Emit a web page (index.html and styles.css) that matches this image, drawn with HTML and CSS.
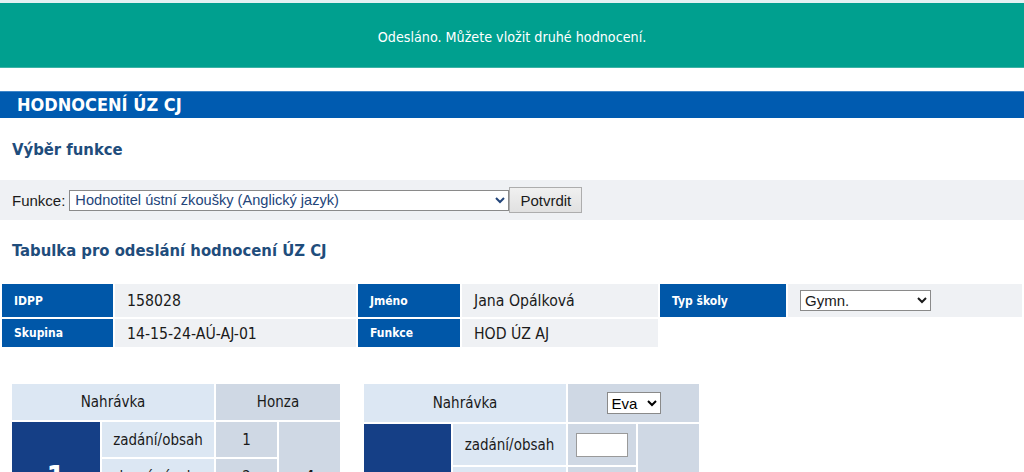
FILE: index.html
```html
<!DOCTYPE html>
<html lang="cs">
<head>
<meta charset="utf-8">
<title>Hodnocení ÚZ CJ</title>
<link rel="stylesheet" href="styles.css">
</head>
<body>
<div class="notice">Odesláno. Můžete vložit druhé hodnocení.</div>
<h1 class="bar">HODNOCENÍ ÚZ CJ</h1>

<h2 class="heading">Výběr funkce</h2>
<form class="func-row">
  <label class="func-label" for="funkce">Funkce:</label>
  <select id="funkce" class="func-select">
    <option>Hodnotitel ústní zkoušky (Anglický jazyk)</option>
  </select>
  <button type="button" class="btn">Potvrdit</button>
</form>

<h2 class="heading heading-2">Tabulka pro odeslání hodnocení ÚZ CJ</h2>

<table class="info">
  <colgroup>
    <col class="c1"><col class="c2"><col class="c3"><col class="c4"><col class="c5"><col>
  </colgroup>
  <tr class="r1">
    <th>IDPP</th><td>158028</td>
    <th>Jméno</th><td>Jana Opálková</td>
    <th>Typ školy</th>
    <td><select class="school"><option>Gymn.</option></select></td>
  </tr>
  <tr class="r2">
    <th>Skupina</th><td>14-15-24-AÚ-AJ-01</td>
    <th>Funkce</th><td>HOD ÚZ AJ</td>
    <td class="empty" colspan="2"></td>
  </tr>
</table>

<div class="scores">
  <table class="score score-a">
    <tr class="head">
      <th colspan="2" class="h-main">Nahrávka</th>
      <th colspan="2" class="h-name">Honza</th>
    </tr>
    <tr>
      <td rowspan="3" class="num">1</td>
      <td class="crit">zadání/obsah</td>
      <td class="val">1</td>
      <td rowspan="3" class="sum">4</td>
    </tr>
    <tr>
      <td class="crit">slovní zásoba</td>
      <td class="val">2</td>
    </tr>
    <tr>
      <td class="crit">gramatika</td>
      <td class="val">1</td>
    </tr>
  </table>

  <table class="score score-b">
    <tr class="head">
      <th colspan="2" class="h-main">Nahrávka</th>
      <th colspan="2" class="h-name"><select class="who"><option>Eva</option></select></th>
    </tr>
    <tr>
      <td rowspan="3" class="num">1</td>
      <td class="crit">zadání/obsah</td>
      <td class="val"><input class="inp" type="text"></td>
      <td rowspan="3" class="sum"></td>
    </tr>
    <tr>
      <td class="crit">slovní zásoba</td>
      <td class="val"><input class="inp" type="text"></td>
    </tr>
    <tr>
      <td class="crit">gramatika</td>
      <td class="val"><input class="inp" type="text"></td>
    </tr>
  </table>
</div>
</body>
</html>
```

FILE: styles.css
```css
html, body {
  margin: 0;
  padding: 0;
  background: #ffffff;
}
body {
  font-family: "DejaVu Sans Condensed", "DejaVu Sans", sans-serif;
  color: #1a1a1a;
  border-top: 3px solid #e3f1f2;
}

.notice {
  height: 65px;
  box-sizing: border-box;
  padding-top: 3px;
  background: #00a08f;
  border-bottom: 1px solid #3db3a6;
  color: #ffffff;
  font-size: 14.2px;
  display: flex;
  align-items: center;
  justify-content: center;
}

.bar {
  margin: 23px 0 0;
  height: 26px;
  border-top: 1px solid #3f86c9;
  background: #005bb0;
  color: #ffffff;
  font-size: 18px;
  font-weight: bold;
  line-height: 26px;
  padding-left: 17px;
}

.heading {
  margin: 22px 0 0 12px;
  font-size: 16.5px;
  font-weight: bold;
  color: #1f4d7c;
  line-height: 20px;
}
.heading-2 {
  margin-top: 21px;
}

.func-row {
  margin-top: 20px;
  height: 40px;
  background: #eff1f4;
  display: flex;
  align-items: center;
  padding-left: 12px;
  font-family: "Liberation Sans", Arial, sans-serif;
  font-size: 15px;
}
.func-label {
  color: #1a1a1a;
  margin-right: 4px;
}
.func-select {
  width: 440px;
  height: 21px;
  border: 1px solid #8a8a8a;
  border-radius: 0;
  background: #ffffff;
  color: #23457a;
  font-family: "Liberation Sans", Arial, sans-serif;
  font-size: 14.6px;
  padding: 0 0 0 1px;
  margin: 0;
}
.btn {
  width: 73px;
  height: 26px;
  margin: 0;
  border: 1px solid #adadad;
  border-radius: 0;
  background: linear-gradient(#f0f0f0, #e1e1e1);
  color: #1a1a1a;
  font-family: "Liberation Sans", Arial, sans-serif;
  font-size: 15px;
  padding: 0;
}

.info {
  margin-top: 21px;
  width: 1024px;
  border-collapse: separate;
  border-spacing: 2px;
  table-layout: fixed;
}
.info .c1 { width: 111px; }
.info .c2 { width: 241px; }
.info .c3 { width: 102px; }
.info .c4 { width: 196px; }
.info .c5 { width: 126px; }
.info th {
  background: #0057a8;
  color: #ffffff;
  font-size: 12px;
  font-weight: bold;
  text-align: left;
  padding: 0 0 0 12px;
}
.info td {
  background: #eff1f4;
  font-size: 15.7px;
  padding: 0 0 0 12px;
}
.info td.empty {
  background: transparent;
}
.info .r1 { height: 33px; }
.info .r2 { height: 28px; }
.school {
  width: 131px;
  height: 21px;
  border: 1px solid #8a8a8a;
  border-radius: 0;
  background: #ffffff;
  font-family: "Liberation Sans", Arial, sans-serif;
  font-size: 15px;
  color: #1a1a1a;
  margin: 0;
}

.scores {
  margin-top: 33px;
  padding-left: 10px;
  display: flex;
  gap: 20px;
  align-items: flex-start;
}
.score {
  border-collapse: separate;
  border-spacing: 2px;
  font-size: 15px;
}
.score th,
.score td {
  padding: 0;
}
.score th {
  font-weight: normal;
  text-align: center;
}
.score .h-main { background: #dce7f3; }
.score .h-name { background: #cfd8e4; }
.score td { text-align: center; }
.score .num {
  background: #153f86;
  color: #ffffff;
  font-size: 30px;
  font-weight: bold;
}
.score .crit { background: #dce7f3; }
.score .val { background: #cfd8e4; }
.score .sum { background: #cfd8e4; font-size: 20px; }

.score-a .head { height: 36px; }
.score-a tr { height: 35px; }
.score-a .num { width: 88px; }
.score-a .crit { width: 112px; }
.score-a .val { width: 61px; }
.score-a .sum { width: 61px; }

.score-b .head { height: 38px; }
.score-b tr { height: 41px; }
.score-b .num { width: 87px; }
.score-b .crit { width: 113px; }
.score-b .val { width: 68px; }
.score-b .sum { width: 61px; }

.who {
  width: 54px;
  height: 22px;
  border: 1px solid #8a8a8a;
  border-radius: 0;
  background: #ffffff;
  font-family: "Liberation Sans", Arial, sans-serif;
  font-size: 15px;
  margin: 0;
}
.inp {
  width: 48px;
  height: 22px;
  border: 1px solid #9a9a9a;
  padding: 0 1px;
  margin: 0;
}
```
